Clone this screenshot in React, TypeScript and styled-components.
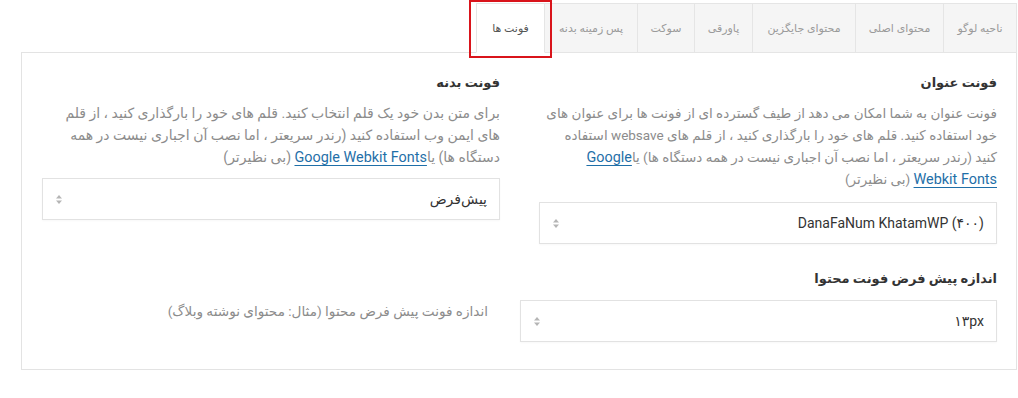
import styled, { createGlobalStyle } from 'styled-components';

const GlobalStyle = createGlobalStyle`
    html, body {
        margin: 0;
        padding: 0;
        background: #FFFFFF;
    }
    body {
        font-family: 'Roboto', 'DejaVu Sans', sans-serif;
    }
`

const Page = styled.div`
    direction: rtl;
    width: 1018px;
    height: 398px;
    box-sizing: border-box;
    padding: 3px 1px 0 21px;
    position: relative;
`

const TabBar = styled.div`
    display: flex;
    position: relative;
    z-index: 1;
    margin-bottom: -1px;
`

const Tab = styled.div<{ $width: number; $active?: boolean }>`
    width: ${p => p.$width}px;
    height: 50px;
    box-sizing: border-box;
    margin-left: -1px;
    border: 1px solid #E5E5E5;
    border-bottom-color: ${p => (p.$active ? '#FFFFFF' : '#E5E5E5')};
    background: ${p => (p.$active ? '#FFFFFF' : '#F5F5F5')};
    color: ${p => (p.$active ? '#555555' : '#9A9A9A')};
    font-size: 11px;
    display: flex;
    align-items: center;
    justify-content: center;
    white-space: nowrap;
`

const Highlight = styled.div`
    position: absolute;
    left: 469px;
    top: 0;
    width: 83px;
    height: 58px;
    box-sizing: border-box;
    border: 2px solid #D9141B;
    z-index: 2;
`

const Panel = styled.div`
    border: 1px solid #E3E3E3;
    padding: 20px 19px 27px 20px;
`

const Columns = styled.div`
    display: grid;
    grid-template-columns: 458px 458px;
    column-gap: 39px;
`

const Field = styled.div`
    display: flex;
    flex-direction: column;
`

const Title = styled.div`
    font-size: 13px;
    font-weight: 700;
    color: #333333;
    line-height: 20px;
`

const Desc = styled.p<{ $size: number; $maxWidth?: number }>`
    margin: 9px 0 0 0;
    max-width: ${p => (p.$maxWidth ? `${p.$maxWidth}px` : 'none')};
    font-size: ${p => p.$size}px;
    line-height: 22px;
    color: #8C8C8C;
`

const Link = styled.a`
    color: #1F6FA8;
    font-size: 14.4px;
    line-height: 1;
    text-decoration: underline;
    text-underline-offset: 3px;
    text-decoration-color: #1F6FA8;
`

const Select = styled.div<{ $width?: number; $top?: number }>`
    width: ${p => (p.$width ? `${p.$width}px` : '100%')};
    height: 42px;
    box-sizing: border-box;
    margin-top: ${p => p.$top ?? 0}px;
    border: 1px solid #E2E2E2;
    box-shadow: 0 1px 2px rgba(0, 0, 0, 0.03);
    display: flex;
    align-items: center;
    justify-content: space-between;
    padding: 0 12px 0 13px;
    font-size: 14px;
    color: #333333;
    flex-shrink: 0;
`

const SelectValue = styled.span`
    white-space: nowrap;
`

const Arrows = styled.svg`
    width: 6px;
    height: 9px;
    display: block;
`

const SizeBlock = styled.div`
    margin-top: 25px;
    width: 477px;
`

const SizeRow = styled.div`
    display: flex;
    align-items: flex-start;
    column-gap: 32px;
    margin-top: 11px;
    width: 955px;
`

const SideNote = styled.div`
    font-size: 13.6px;
    line-height: 22px;
    color: #8C8C8C;
    white-space: nowrap;
`

function SelectArrows() {
    return (
        <Arrows viewBox="0 0 6 9">
            <path d="M3 0 L6 3.5 L0 3.5 Z" fill="#B5B5B5" />
            <path d="M3 9 L6 5.5 L0 5.5 Z" fill="#B5B5B5" />
        </Arrows>
    )
}

const tabs = [
    { label: 'ناحیه لوگو', width: 74 },
    { label: 'محتوای اصلی', width: 89 },
    { label: 'محتوای جایگزین', width: 104 },
    { label: 'پاورقی', width: 59 },
    { label: 'سوکت', width: 58 },
    { label: 'پس زمینه بدنه', width: 94 },
    { label: 'فونت ها', width: 69, active: true },
]

export default function App() {
    return (
        <Page>
            <GlobalStyle />
            <Highlight />
            <TabBar>
                {tabs.map(t => (
                    <Tab key={t.label} $width={t.width} $active={t.active}>
                        {t.label}
                    </Tab>
                ))}
            </TabBar>
            <Panel>
                <Columns>
                    <Field>
                        <Title>فونت عنوان</Title>
                        <Desc $size={13.5} $maxWidth={453}>
                            فونت عنوان به شما امکان می دهد از طیف گسترده ای از فونت ها برای عنوان های خود استفاده کنید. قلم های خود را بارگذاری کنید ، از قلم های websave استفاده کنید (رندر سریعتر ، اما نصب آن اجباری نیست در همه دستگاه ها) یا<Link>Google Webkit Fonts</Link> (بی نظیرتر)
                        </Desc>
                        <Select $top={12}>
                            <SelectValue>DanaFaNum KhatamWP (۴۰۰)</SelectValue>
                            <SelectArrows />
                        </Select>
                    </Field>
                    <Field>
                        <Title>فونت بدنه</Title>
                        <Desc $size={14}>
                            برای متن بدن خود یک قلم انتخاب کنید. قلم های خود را بارگذاری کنید ، از قلم های ایمن وب استفاده کنید (رندر سریعتر ، اما نصب آن اجباری نیست در همه دستگاه ها) یا<Link>Google Webkit Fonts</Link> (بی نظیرتر)
                        </Desc>
                        <Select $top={10}>
                            <SelectValue>پیش‌فرض</SelectValue>
                            <SelectArrows />
                        </Select>
                    </Field>
                </Columns>
                <SizeBlock>
                    <Title>اندازه پیش فرض فونت محتوا</Title>
                </SizeBlock>
                <SizeRow>
                    <Select $width={477}>
                        <SelectValue>۱۳px</SelectValue>
                        <SelectArrows />
                    </Select>
                    <SideNote>اندازه فونت پیش فرض محتوا (مثال: محتوای نوشته وبلاگ)</SideNote>
                </SizeRow>
            </Panel>
        </Page>
    )
}
